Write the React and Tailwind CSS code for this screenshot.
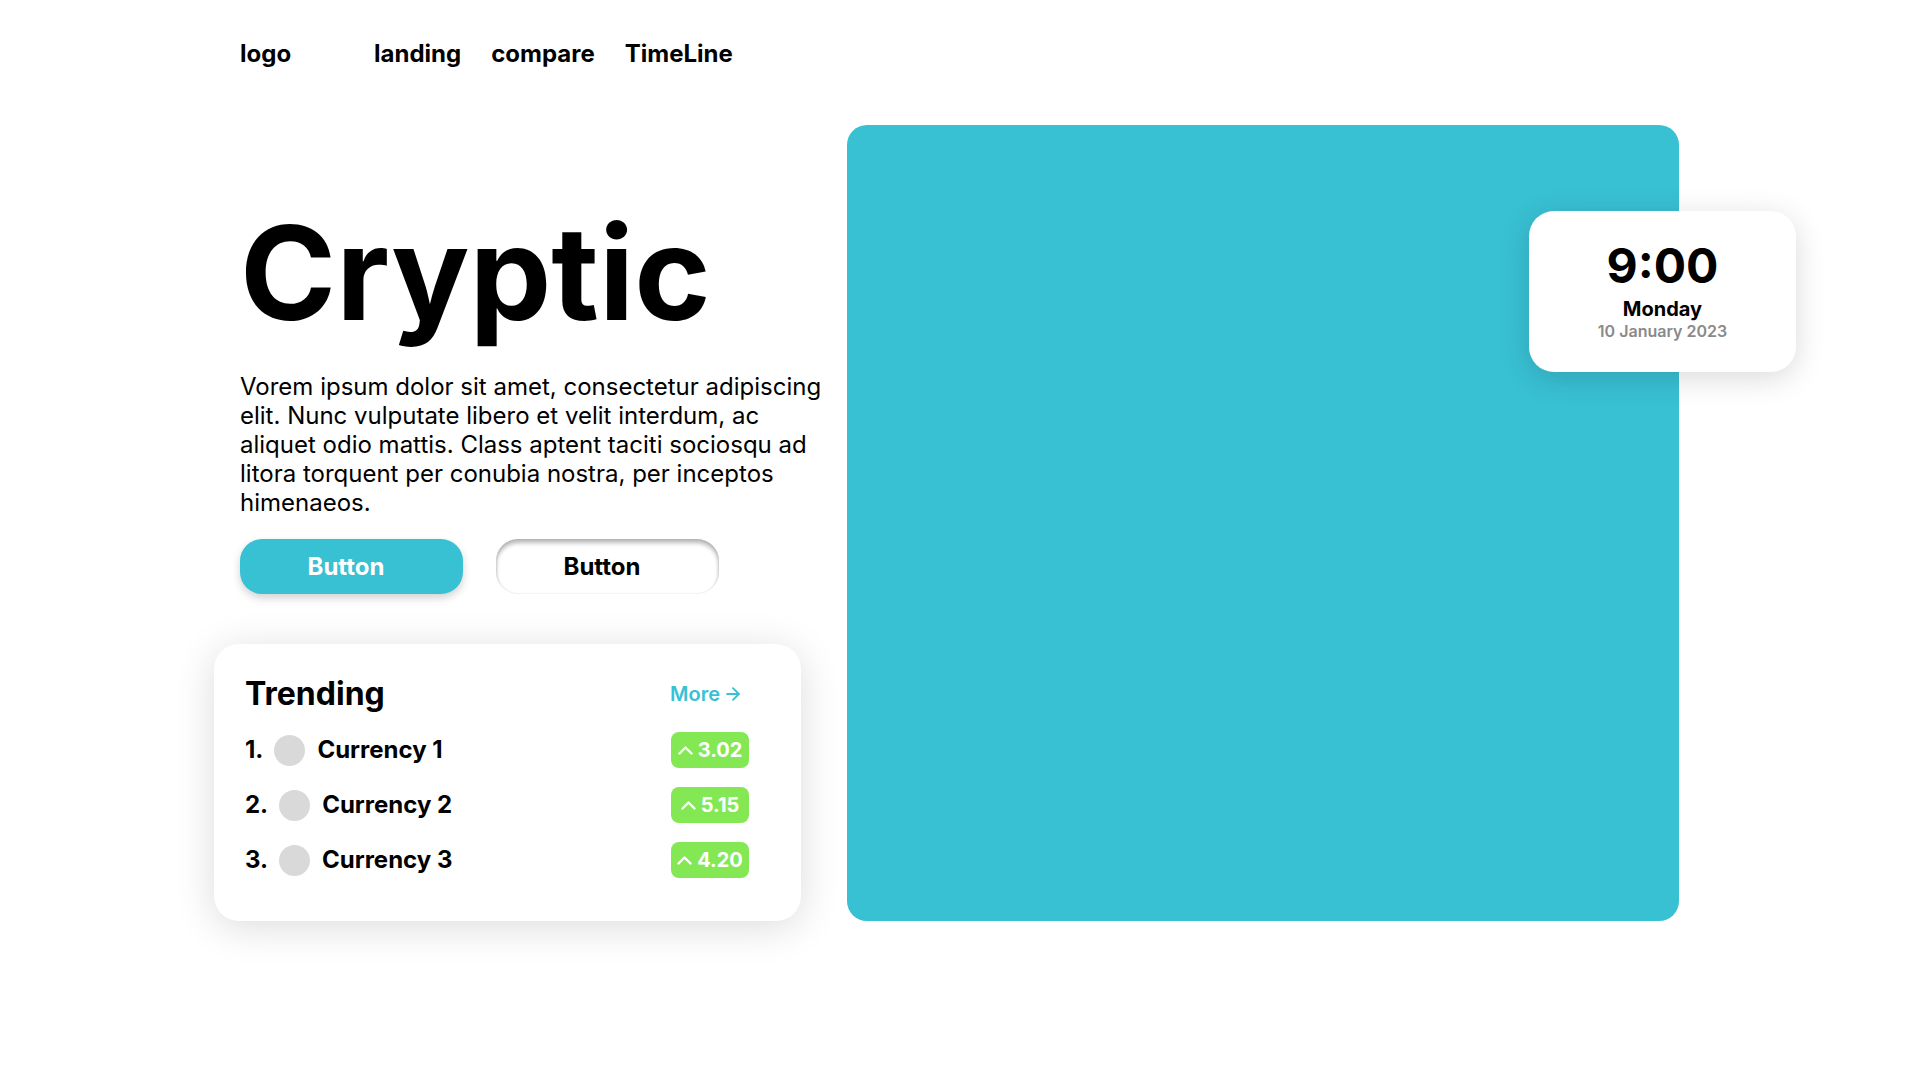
import { ArrowRight } from 'lucide-react';

const trending = [
  { rank: '1.', name: 'Currency 1', change: '3.02' },
  { rank: '2.', name: 'Currency 2', change: '5.15' },
  { rank: '3.', name: 'Currency 3', change: '4.20' },
];

function TrendRow({ rank, name, change }) {
  return (
    <div className="flex items-center justify-between h-[36px]">
      <div className="flex items-center">
        <span className="text-[24px] font-bold leading-none">{rank}</span>
        <div className="w-[31px] h-[31px] rounded-full bg-[#D9D9D9] ml-[11px]"></div>
        <span className="text-[24px] font-bold leading-none ml-[12px]">{name}</span>
      </div>
      <div className="w-[78px] h-[36px] rounded-[8px] bg-[#84E855] flex items-center justify-center gap-[5px] text-white">
        <svg width="15" height="9" viewBox="0 0 15 9" fill="none" stroke="currentColor" strokeWidth="2.4" strokeLinecap="round" strokeLinejoin="round">
          <polyline points="1.5,7.5 7.5,1.5 13.5,7.5" />
        </svg>
        <span className="text-[20px] font-bold leading-none">{change}</span>
      </div>
    </div>
  );
}

export default function App() {
  return (
    <div className="min-h-screen bg-white text-black font-[Inter,sans-serif]">
      {/* Nav */}
      <nav className="flex items-center pl-[240px] pt-[36px] text-[24px] leading-[36px] font-bold">
        <span>logo</span>
        <div className="flex items-center gap-[30px] ml-[83px]">
          <a>landing</a>
          <a>compare</a>
          <a>TimeLine</a>
        </div>
      </nav>

      <div className="flex pl-[240px] mt-[53px]">
        {/* Left column */}
        <div className="w-[590px] shrink-0 pt-[83px]">
          <h1 className="text-[130px] leading-none font-bold">Cryptic</h1>
          <p className="mt-[34px] text-[24px] leading-[29px] w-[590px]">
            Vorem ipsum dolor sit amet, consectetur adipiscing elit. Nunc vulputate libero et velit interdum, ac aliquet odio mattis. Class aptent taciti sociosqu ad litora torquent per conubia nostra, per inceptos himenaeos.
          </p>
          <div className="flex gap-[33px] mt-[22px]">
            <button className="w-[223px] h-[55px] pr-[11px] rounded-[22px] bg-[#38C0D3] text-white text-[24px] font-bold shadow-[0_4px_8px_rgba(0,0,0,0.18)]">
              Button
            </button>
            <button className="w-[223px] h-[55px] pr-[11px] rounded-[22px] bg-white text-black text-[24px] font-bold shadow-[inset_0_4px_4px_rgba(0,0,0,0.28),inset_1px_0_2px_rgba(0,0,0,0.08),inset_-1px_0_2px_rgba(0,0,0,0.08)]">
              Button
            </button>
          </div>

          {/* Trending */}
          <div className="mt-[50px] -ml-[26px] w-[587px] h-[277px] rounded-[25px] bg-white shadow-[0_6px_40px_rgba(0,0,0,0.14)] pt-[30px] pl-[31px] pr-[52px]">
            <div className="flex items-center justify-between h-[40px] mb-[18px]">
              <h2 className="text-[32px] leading-[40px] font-bold">Trending</h2>
              <a className="flex items-center gap-[3px] mr-[6px] text-[20px] font-semibold text-[#38C0D3]">
                More
                <ArrowRight className="w-[20px] h-[20px]" strokeWidth={2.25} />
              </a>
            </div>
            <div className="flex flex-col gap-[19px]">
              {trending.map((t) => (
                <TrendRow key={t.rank} {...t} />
              ))}
            </div>
          </div>
        </div>

        {/* Right panel */}
        <div className="relative ml-[17px] w-[832px] h-[796px] rounded-[20px] bg-[#38C0D3]">
          <div className="absolute left-[682px] top-[86px] w-[267px] h-[161px] rounded-[25px] bg-white shadow-[0_6px_30px_rgba(0,0,0,0.15)] flex flex-col items-center justify-center">
            <span className="text-[48px] leading-[48px] font-bold">9:00</span>
            <span className="mt-[7px] text-[20px] leading-[24px] font-bold">Monday</span>
            <span className="text-[16px] leading-[20px] font-semibold text-[#8A8A8A]">10 January 2023</span>
          </div>
        </div>
      </div>
    </div>
  );
}
